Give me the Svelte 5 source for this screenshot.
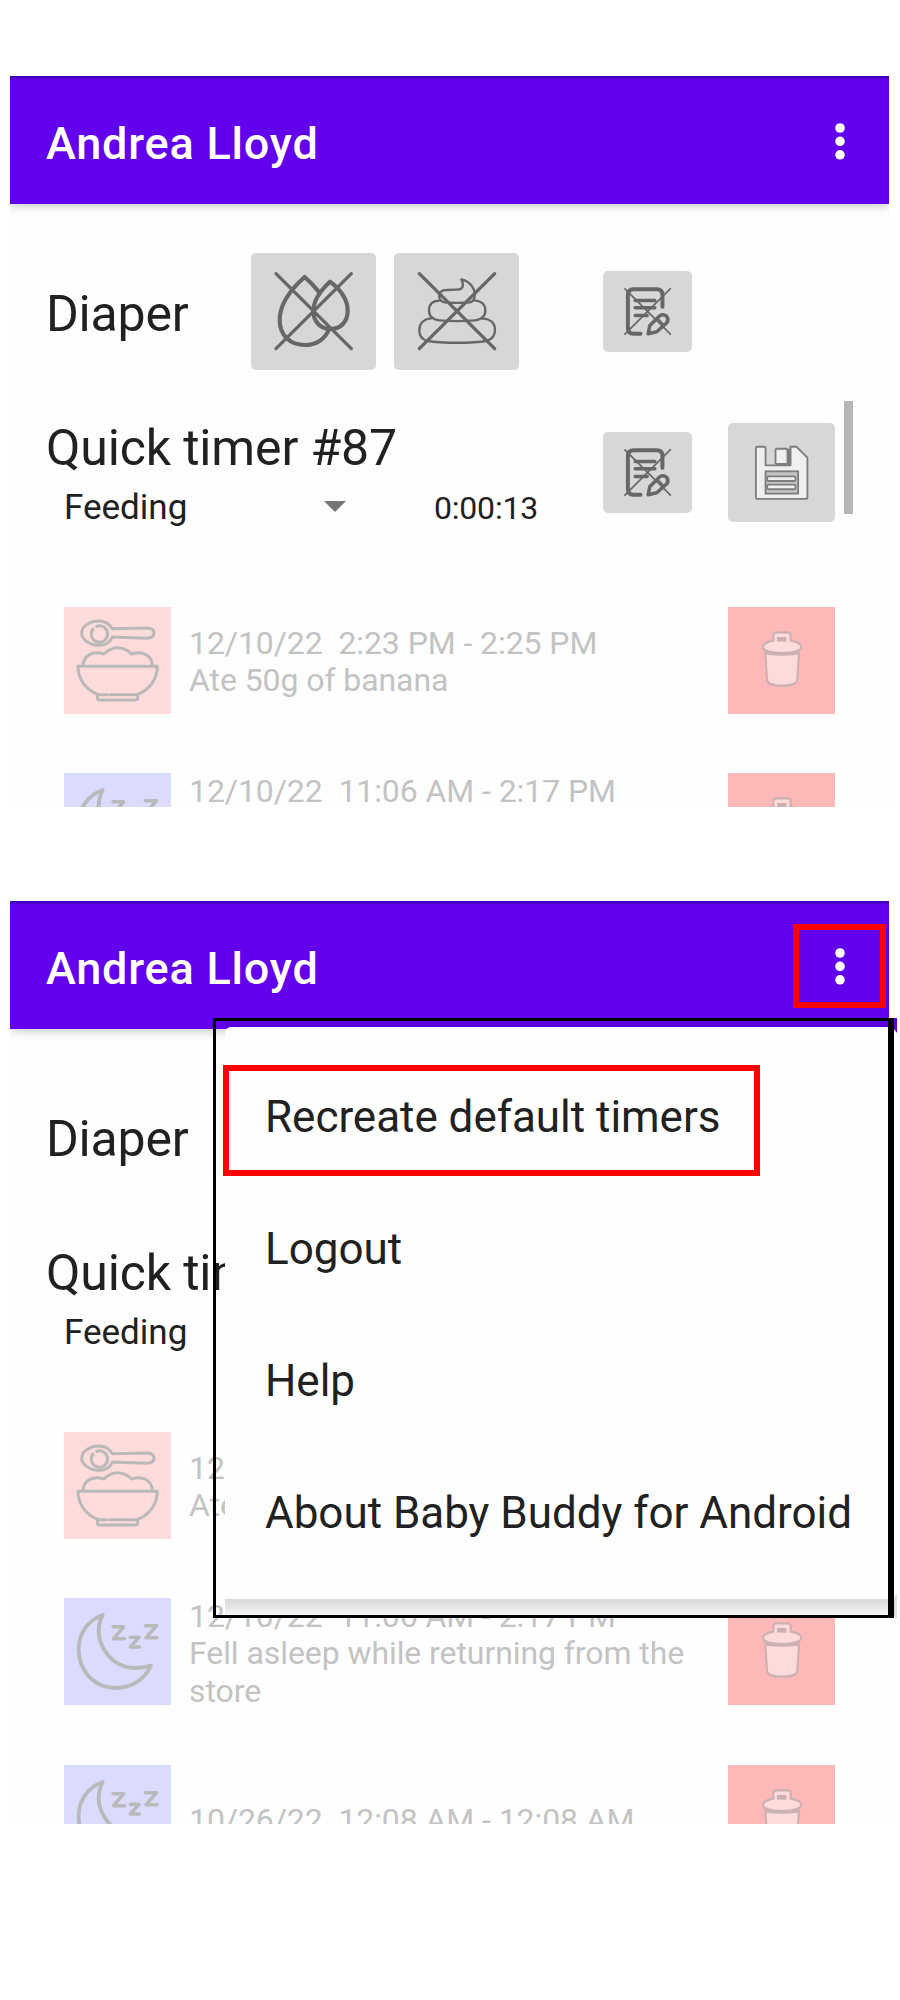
<script>
  const entries = [
    { kind: 'feeding', lines: ['12/10/22  2:23 PM - 2:25 PM', 'Ate 50g of banana'] },
    { kind: 'sleep', lines: ['12/10/22  11:06 AM - 2:17 PM', 'Fell asleep while returning from the', 'store'] },
    { kind: 'sleep', lines: ['10/26/22  12:08 AM - 12:08 AM'] }
  ];
  const screens = [
    { height: 731, count: 2, menu: false },
    { height: 923, count: 3, menu: true }
  ];
  const menuItems = ['Recreate default timers', 'Logout', 'Help', 'About Baby Buddy for Android'];
</script>

{#snippet noteButton()}
  <button class="btn note" aria-label="Notes">
    <svg viewBox="38 62 268 244" width="89" height="81" class="line">
      <path stroke-width="5" d="M104 116 241 252M241 115 104 252" />
      <path stroke-width="12" d="M217 170V134Q217 117 200 117H130Q113 117 113 134V234Q113 251 130 251H151" />
      <path stroke-width="10.5" d="M135 151H194M135 173H194M135 196H171" />
      <path stroke-width="10.5" d="M174 251 179 226 209 197Q219 190 229 198 238 208 230 218L200 245Z" />
      <path stroke-width="6" d="M203 206 220 224" />
    </svg>
  </button>
{/snippet}

<div class="page">
  {#each screens as screen}
    <section class="screen" style="height: {screen.height}px">
      <div class="content">
        <header class="bar">
          <h1>Andrea Lloyd</h1>
          <svg class="dots" viewBox="0 0 10 37" width="10" height="37" fill="#fff">
            <circle cx="5" cy="5" r="4.8" /><circle cx="5" cy="18.4" r="4.8" /><circle cx="5" cy="31.8" r="4.8" />
          </svg>
        </header>

        <div class="diaper">
          <span class="label">Diaper</span>
          <button class="btn big" aria-label="Wet">
            <svg viewBox="33 39 375 351" width="125" height="117" class="line">
              <path stroke-width="10" d="M108 101 334 326M334 101 108 326" />
              <path stroke-width="12.5" d="M238 157Q216 130 194 111C150 150 119 196 119 240C119 288 153 315 194 315C228 315 255 298 267 268" />
              <path stroke-width="12.5" d="M270 125C236 156 220 185 220 214C220 246 243 267 272 267C302 267 323 245 323 213C323 180 302 149 270 125Z" />
            </svg>
          </button>
          <button class="btn big" aria-label="Solid">
            <svg viewBox="462 39 375 351" width="125" height="117" class="line">
              <path stroke-width="10" d="M538 101 764 326M764 101 538 326" />
              <path stroke-width="7" d="M664 118C692 124 709 150 703 174Q701 184 690 187 650 190 614 187 600 184 598 172C596 156 606 150 620 150L650 149C669 149 673 138 664 118Z" />
              <path stroke-width="7" d="M598 182C576 183 567 195 567 211C567 229 579 239 598 241C632 244 672 244 705 241C725 239 736 228 736 211C736 193 723 182 703 181" />
              <path stroke-width="7" d="M573 235C549 237 538 253 538 272C538 288 547 298 562 303C605 310 697 310 740 303C756 298 765 287 765 270C765 250 752 237 728 236" />
            </svg>
          </button>
          {@render noteButton()}
        </div>

        <div class="timer">
          <div class="timer-info">
            <div class="timer-name">Quick timer #87</div>
            <div class="timer-sub">
              <span class="kind">Feeding</span>
              <svg class="caret" viewBox="0 0 22 11" width="22" height="11"><path fill="#757575" d="M0 0H22L11 11Z" /></svg>
              <span class="clock">0:00:13</span>
            </div>
          </div>
          {@render noteButton()}
          <button class="btn save" aria-label="Save">
            <svg viewBox="414 519 322 297" width="107" height="99" stroke="#7c7d7c" stroke-width="5.5" stroke-linejoin="round">
              <path fill="#efefef" d="M503 590H522Q527 590 527 595V646H602V590H620L653 623V741Q653 747 647 747H504Q498 747 498 741V596Q498 590 503 590Z" />
              <path fill="#7c7d7c" stroke="none" d="M590 596H604V646H590Z" />
              <rect x="557" y="596" width="36" height="46" rx="4" fill="#efefef" />
              <rect x="527" y="664" width="98" height="67" fill="#c2c6c3" stroke-linejoin="miter" />
              <rect x="532" y="679" width="85" height="14" rx="4" fill="#efefef" />
              <rect x="532" y="704" width="85" height="14" rx="4" fill="#efefef" />
            </svg>
          </button>
          <div class="scroll"></div>
        </div>

        {#each entries.slice(0, screen.count) as entry}
          <div class="entry">
            <div class="tile {entry.kind}">
              {#if entry.kind === 'feeding'}
                <svg viewBox="192 681 321 321" width="107" height="107" class="soft" stroke-width="9">
                  <path d="M337 746C327 729 312 723 297 723C268 723 245 740 245 759C245 779 270 796 299 796C316 796 330 788 337 771L440 775Q462 774 462 759 462 745 440 744Z" />
                  <path d="M290 739A24.500 24.500 0 1 1 279 747" />
                  <path d="M249 857C250 828 276 811 312 822Q330 803 353 803T395 822C430 811 456 828 457 857" />
                  <path d="M322 944H295C258 930 234 898 234 859H472C472 898 448 930 411 944H331" />
                  <path d="M292 946V953Q292 960 300 960H405Q413 960 413 953V946" />
                </svg>
              {:else}
                <svg viewBox="72 594 321 321" width="107" height="107" class="soft" stroke-width="11.500">
                  <path d="M188 645C140 662 116 704 116 748C116 815 165 864 229 864C275 864 314 838 333 797C272 815 222 798 193 750C171 713 172 677 188 645Z" />
                  <path stroke-width="10.500" d="M219 680H251L221 716H254M271 712H297L271 741H298M316 677H350L318 713H351" />
                </svg>
              {/if}
            </div>
            <div class="text">
              {#each entry.lines as line}<div>{line}</div>{/each}
            </div>
            <div class="tile trash">
              <svg viewBox="834 681 321 321" width="107" height="107" fill="#ffdada" stroke="#cbb1b1" stroke-width="6.5" stroke-linejoin="round">
                <path d="M946 818 951 900Q953 917 996 917T1042 900L1047 818Z" />
                <path stroke-width="8" d="M950 820Q996 826 1043 820" />
                <path d="M939 801C939 790 953 785 970 782V766Q970 757 979 757H1013Q1022 757 1022 766V782C1040 785 1054 790 1054 801C1054 812 1030 819 996 819S939 812 939 801Z" />
                <path fill="#cbb1b1" stroke="none" d="M981 771H1009V785H981Z" />
              </svg>
            </div>
          </div>
        {/each}
      </div>

      {#if screen.menu}
        <div class="mark mark-dots"></div>
        <svg class="edge edge-top" viewBox="0 0 3 15" width="3" height="15"><path fill="#5c00de" d="M0 0H3V15L0 11Z" /></svg>
        <svg class="edge edge-bottom" viewBox="0 0 3 25" width="3" height="25"><path fill="#e0e0e0" d="M3 0V25H0V4Z" /></svg>
        <div class="frame">
          <div class="strip"></div>
          <nav class="menu">
            {#each menuItems as item}<div class="item">{item}</div>{/each}
          </nav>
          <div class="shade"></div>
        </div>
        <div class="mark mark-item"></div>
      {/if}
    </section>
  {/each}
</div>

<style>
  :global(body) { background: #fff; }
  .page {
    width: 900px; height: 2000px; box-sizing: border-box; padding: 76px 0 0 10px;
    display: flex; flex-direction: column; gap: 94px; overflow: hidden;
    font-family: Roboto, sans-serif; color: #212121;
  }
  .screen { position: relative; width: 879px; flex: none; }
  .content { height: 100%; overflow: hidden; background: #fefefe; }
  .bar {
    height: 127.5px; box-sizing: border-box; padding: 8px 44px 0 36px;
    display: flex; align-items: center; justify-content: space-between;
    background: linear-gradient(#3700b3 0, #4300c4 1.5px, #6200ee 4px);
    box-shadow: 0 2px 9px rgba(0, 0, 0, 0.22);
  }
  h1 { margin: 0; font-size: 45px; line-height: 53px; font-weight: 500; color: #fff; letter-spacing: 0.8px; }
  .dots { margin-top: -5px; }
  .btn { border: 0; padding: 0; flex: none; background: #d6d7d7; border-radius: 5px; display: block; overflow: hidden; }
  .btn svg, .tile svg { display: block; }
  .big { width: 125px; height: 117px; }
  .note { width: 89px; height: 81px; }
  .save { width: 107px; height: 99px; }
  .line { fill: none; stroke: #666766; stroke-linecap: round; stroke-linejoin: round; }
  .soft { fill: none; stroke: #b9b9b9; stroke-linecap: round; stroke-linejoin: round; }
  .diaper { display: flex; align-items: center; margin-top: 49px; height: 117px; padding-left: 36px; }
  .label { width: 205px; font-size: 50px; letter-spacing: -0.2px; line-height: 59px; padding-top: 6px; }
  .diaper .big + .big { margin-left: 18px; }
  .diaper .note { margin-left: 84px; }
  .timer { display: flex; align-items: center; height: 143px; margin: 31px 0 33.5px; padding-left: 36px; }
  .timer-info { width: 557px; height: 143px; padding-top: 17px; box-sizing: border-box; }
  .timer-name { font-size: 50px; letter-spacing: -0.15px; line-height: 59px; margin-top: 1px; }
  .timer-sub { display: flex; align-items: baseline; padding-left: 18px; margin-top: 9px; line-height: 41px; }
  .kind { width: 260px; font-size: 35px; }
  .caret { align-self: center; margin-bottom: 2px; }
  .clock { margin-left: 88px; font-size: 32px; letter-spacing: -0.2px; }
  .save { margin-left: 36px; }
  .scroll { align-self: flex-start; width: 9px; height: 113px; margin-left: 9px; background: #b6b6b6; }
  .entry { display: flex; align-items: center; height: 166.5px; padding-left: 54px; }
  .tile { width: 107px; height: 107px; flex: none; }
  .feeding { background: #ffdbdb; }
  .sleep { background: #dbdbff; }
  .trash { background: #ffb8b8; }
  .text {
    width: 539px; box-sizing: border-box; padding: 4px 0 0 18px; margin-right: 18px;
    font-size: 32px; line-height: 37.5px; letter-spacing: -0.08px; color: #c3c3c3; white-space: pre;
  }
  .mark { position: absolute; box-sizing: border-box; border: 6px solid #f00; }
  .mark-dots { left: 783px; top: 23px; width: 93px; height: 84px; }
  .mark-item { left: 213px; top: 164px; width: 537px; height: 111px; }
  .frame {
    position: absolute; left: 203px; top: 117px; width: 681px; height: 600px; box-sizing: border-box;
    border: 3px solid #000; border-right-width: 6px; padding-left: 9px; display: flex; flex-direction: column;
  }
  .strip { height: 6px; background: #5a00da; flex: none; }
  .menu { height: 572px; box-sizing: border-box; padding: 24px 0 0 40px; background: #fefefe; border-radius: 6px 0 0 6px; flex: none; }
  .item { height: 132px; line-height: 132px; font-size: 44px; letter-spacing: -0.03px; white-space: nowrap; }
  .shade { flex: 1; background: linear-gradient(#d8d8d8, #f3f3f3); }
  .edge { position: absolute; left: 884px; }
  .edge-top { top: 117px; }
  .edge-bottom { top: 692px; }
</style>
